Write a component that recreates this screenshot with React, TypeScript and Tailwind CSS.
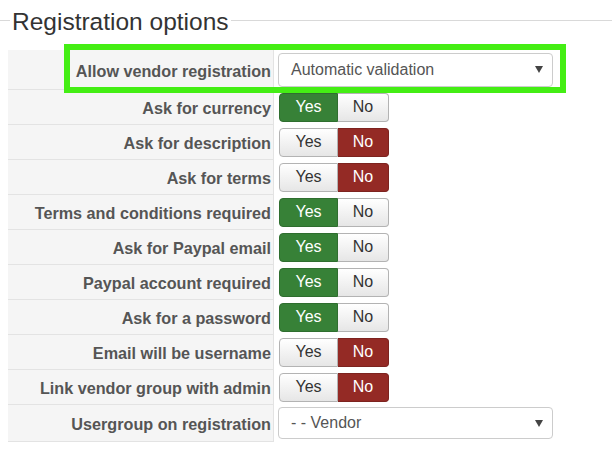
import React from "react";

type Row = {
  label: string;
  kind: "toggle" | "select";
  value: string;
};

const rows: Row[] = [
  { label: "Allow vendor registration", kind: "select", value: "Automatic validation" },
  { label: "Ask for currency", kind: "toggle", value: "yes" },
  { label: "Ask for description", kind: "toggle", value: "no" },
  { label: "Ask for terms", kind: "toggle", value: "no" },
  { label: "Terms and conditions required", kind: "toggle", value: "yes" },
  { label: "Ask for Paypal email", kind: "toggle", value: "yes" },
  { label: "Paypal account required", kind: "toggle", value: "yes" },
  { label: "Ask for a password", kind: "toggle", value: "yes" },
  { label: "Email will be username", kind: "toggle", value: "no" },
  { label: "Link vendor group with admin", kind: "toggle", value: "no" },
  { label: "Usergroup on registration", kind: "select", value: "- - Vendor" },
];

const Toggle = ({ value }: { value: string }) => {
  const off =
    "bg-gradient-to-b from-white to-[#e6e6e6] text-[#333] border-[#b3b3b3]";
  return (
    <div className="flex h-[29px] text-[16px] leading-none">
      <div
        className={`w-[59px] flex items-center justify-center rounded-l-[4px] border ${
          value === "yes"
            ? "bg-[#378137] border-[#2f6e2f] text-white"
            : off
        }`}
      >
        Yes
      </div>
      <div
        className={`w-[51px] flex items-center justify-center rounded-r-[4px] border border-l-0 ${
          value === "no" ? "bg-[#942a25] border-[#7d231f] text-white" : off
        }`}
      >
        No
      </div>
    </div>
  );
};

const Select = ({ value, tall }: { value: string; tall: boolean }) => (
  <div
    className={`w-[275px] ${
      tall ? "h-[34px]" : "h-[32px]"
    } border border-[#ccc] rounded-[4px] bg-white flex items-center justify-between pl-[12px] pr-[9px] text-[16px] text-[#555]`}
  >
    <span>{value}</span>
    <svg width="8" height="7" viewBox="0 0 8 7">
      <path d="M0 0 H8 L4 7 Z" fill="#444" />
    </svg>
  </div>
);

export default function App() {
  return (
    <div
      className="relative w-[612px] h-[452px] bg-white overflow-hidden"
      style={{ fontFamily: '"Liberation Sans", Arial, sans-serif' }}
    >
      {/* legend */}
      <div className="flex items-start mt-[6px]">
        <div className="w-[10px] mt-[14px] border-t border-[#d9d9d9]" />
        <span className="px-[2px] pt-[2px] text-[24.5px] leading-[28px] text-[#333]">
          Registration options
        </span>
        <div className="flex-1 mt-[14px] border-t border-[#d9d9d9]" />
      </div>

      {/* table */}
      <div className="ml-[8px] mt-[14px]">
        {rows.map((row, i) => {
          const first = i === 0;
          const last = i === rows.length - 1;
          return (
            <div
              key={row.label}
              className={`flex ${first ? "h-[40px]" : last ? "h-[37px]" : "h-[35px]"}`}
            >
              <div className="w-[266px] bg-[#f5f5f5] border-b border-r border-[#e3e3e3] flex items-center justify-end pr-[2px] pt-[3px] text-[16.2px] font-bold text-[#555] whitespace-nowrap">
                {row.label}
              </div>
              <div className="flex-1 flex items-center pl-[4px] pb-[1px]">
                {row.kind === "toggle" ? (
                  <div className="ml-[1px]">
                    <Toggle value={row.value} />
                  </div>
                ) : (
                  <Select value={row.value} tall={first} />
                )}
              </div>
            </div>
          );
        })}
      </div>

      {/* highlight */}
      <div className="absolute left-[64px] top-[44px] w-[502px] h-[49px] border-[6px] border-[#44ee14]" />
    </div>
  );
}
